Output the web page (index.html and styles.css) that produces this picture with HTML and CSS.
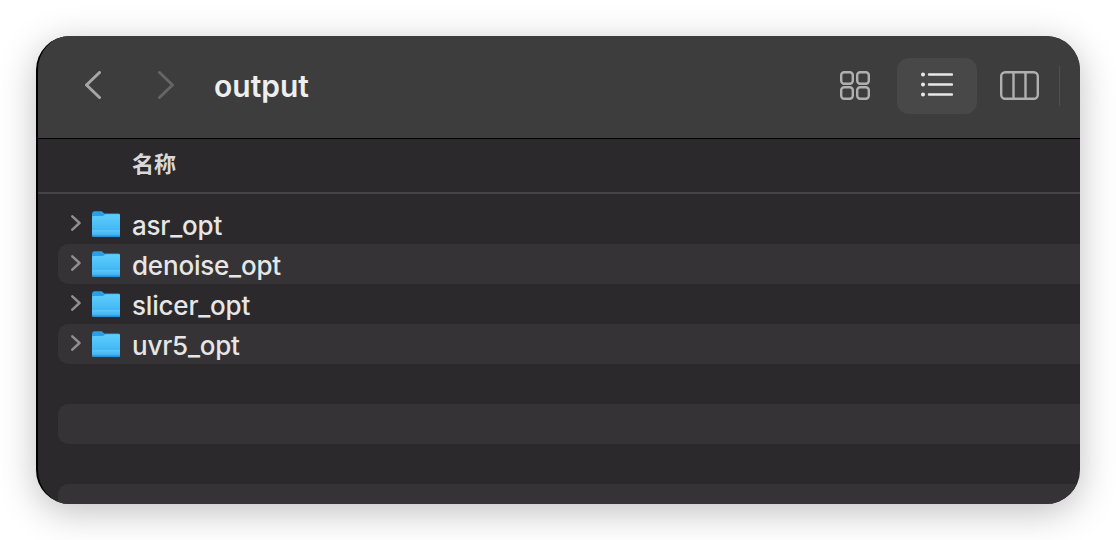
FILE: index.html
```html
<!DOCTYPE html>
<html lang="zh-CN">
<head>
    <meta charset="UTF-8">
    <title>output</title>
    <link rel="stylesheet" href="styles.css">
</head>
<body>
    <div class="window">
        <!-- ツールバー -->
        <header class="toolbar">
            <svg class="nav nav-back" width="16" height="28" viewBox="0 0 16 28"><path d="M14.5 1.5 1.5 14l13 12.500"/></svg>
            <svg class="nav nav-forward" width="16" height="28" viewBox="0 0 16 28"><path d="M1.5 1.5 14.500 14l-13 12.500"/></svg>
            <h1 class="title">output</h1>
            <svg class="view view-grid" width="30" height="29" viewBox="0 0 30 29">
                <rect x="1.200" y="1.200" width="11.600" height="11.600" rx="3"/>
                <rect x="17.200" y="1.200" width="11.600" height="11.600" rx="3"/>
                <rect x="1.200" y="16.200" width="11.600" height="11.600" rx="3"/>
                <rect x="17.200" y="16.200" width="11.600" height="11.600" rx="3"/>
            </svg>
            <div class="view-active">
                <svg class="view-list" width="32" height="25" viewBox="0 0 32 25">
                    <circle cx="2" cy="2.500" r="2"/>
                    <circle cx="2" cy="12.500" r="2"/>
                    <circle cx="2" cy="22.500" r="2"/>
                    <path d="M8 2.500h23M8 12.500h23M8 22.500h23"/>
                </svg>
            </div>
            <svg class="view view-columns" width="39" height="29" viewBox="0 0 39 29">
                <rect x="1.200" y="1.200" width="36.600" height="26.600" rx="4"/>
                <path d="M13.500 1v27M25.500 1v27"/>
            </svg>
            <div class="divider"></div>
        </header>

        <div class="list-header">名称</div>

        <div class="rows">
            <div class="row">
                <svg class="disclosure" width="10" height="16" viewBox="0 0 10 16"><path d="M1.300 1.300 8.500 8l-7.200 6.700"/></svg>
                <svg class="folder" width="28" height="26" viewBox="0 0 28 26"><use href="#folder-icon"/></svg>
                <span class="name">asr_opt</span>
            </div>
            <div class="row stripe">
                <svg class="disclosure" width="10" height="16" viewBox="0 0 10 16"><path d="M1.300 1.300 8.500 8l-7.200 6.700"/></svg>
                <svg class="folder" width="28" height="26" viewBox="0 0 28 26"><use href="#folder-icon"/></svg>
                <span class="name">denoise_opt</span>
            </div>
            <div class="row">
                <svg class="disclosure" width="10" height="16" viewBox="0 0 10 16"><path d="M1.300 1.300 8.500 8l-7.200 6.700"/></svg>
                <svg class="folder" width="28" height="26" viewBox="0 0 28 26"><use href="#folder-icon"/></svg>
                <span class="name">slicer_opt</span>
            </div>
            <div class="row stripe">
                <svg class="disclosure" width="10" height="16" viewBox="0 0 10 16"><path d="M1.300 1.300 8.500 8l-7.200 6.700"/></svg>
                <svg class="folder" width="28" height="26" viewBox="0 0 28 26"><use href="#folder-icon"/></svg>
                <span class="name">uvr5_opt</span>
            </div>
            <div class="row"></div>
            <div class="row stripe"></div>
            <div class="row"></div>
            <div class="row stripe"></div>
        </div>
    </div>

    <svg class="defs" width="0" height="0">
        <defs>
            <linearGradient id="folder-front" x1="0" y1="0" x2="0" y2="1">
                <stop offset="0" stop-color="#5fcdfc"/>
                <stop offset="0.68" stop-color="#42b8f4"/>
                <stop offset="0.7" stop-color="#5cc6f9"/>
                <stop offset="1" stop-color="#38ace9"/>
            </linearGradient>
            <symbol id="folder-icon" viewBox="0 0 28 26">
                <path d="M0 3.200C0 1.400 1 .3 2.600.3h6c1.200 0 1.800.4 2.600 1.100.9.8 1.500 1.200 2.700 1.200h12.400c1 0 1.700.7 1.700 1.700V10H0z" fill="#2a9fe6"/>
                <path d="M0 6.400c0-.9.7-1.300 1.400-1.300h7.800c1.300 0 2-.3 2.800-.9.8-.6 1.400-1 2.600-1h12c1.100 0 1.900.6 1.900 1.700v19.400c0 1-.7 1.700-1.700 1.700H1.700C.7 26 0 25.300 0 24.300z" fill="url(#folder-front)"/>
                <path d="M0 24.600h28v.2c0 .7-.7 1.200-1.600 1.200H1.600C.7 26 0 25.500 0 24.800z" fill="#2490d8"/>
            </symbol>
        </defs>
    </svg>
</body>
</html>
```

FILE: styles.css
```css
/* 基本デザイン */
html,
body {
    height: 100%;
}

body {
    box-sizing: border-box;
    margin: 0;
    padding: 36px;
    background-color: #ffffff;
    font-family: Inter, "Liberation Sans", "Noto Sans CJK SC", sans-serif;
    overflow: hidden;
}

.defs {
    display: block;
}

/* ウィンドウ */
.window {
    box-sizing: border-box;
    width: 1044px;
    height: 468px;
    border-left: 2px solid #000000;
    border-radius: 34px;
    background-color: #2b292b;
    box-shadow: 0 8px 36px rgba(0, 0, 0, 0.25);
    overflow: hidden;
}

/* ツールバー */
.toolbar {
    display: flex;
    align-items: center;
    box-sizing: border-box;
    height: 103px;
    padding: 0 0 2px 47px;
    background-color: #3d3d3d;
    border-bottom: 1px solid #000000;
}

.nav,
.view {
    flex: none;
    margin-top: -2px;
}

.nav path {
    fill: none;
    stroke-width: 3;
    stroke-linecap: round;
    stroke-linejoin: round;
}

.nav-back path {
    stroke: #a6a6a6;
}

.nav-forward {
    margin-left: 57px;
}

.nav-forward path {
    stroke: #656565;
}

.title {
    flex: none;
    width: 626px;
    margin: 0 0 0 40px;
    color: #eeeeee;
    font-size: 30px;
    font-weight: 600;
    line-height: 32px;
}

.view rect,
.view path {
    fill: none;
    stroke: #b0b0b0;
    stroke-width: 2.4;
}

.view-active {
    display: flex;
    flex: none;
    align-items: center;
    justify-content: center;
    width: 80px;
    height: 56px;
    margin: 0 23px 0 27px;
    border-radius: 12px;
    background-color: #484848;
}

.view-list {
    margin-top: -4px;
}

.view-list circle {
    fill: #e8e8e8;
}

.view-list path {
    fill: none;
    stroke: #e8e8e8;
    stroke-width: 2.4;
    stroke-linecap: round;
}

.divider {
    flex: none;
    width: 1px;
    height: 40px;
    margin-left: 20px;
    background-color: #4f4f4f;
}

/* 一覧のヘッダー */
.list-header {
    box-sizing: border-box;
    height: 55px;
    padding-left: 94px;
    border-bottom: 2px solid #444345;
    color: #d8d8d8;
    font-family: "Noto Sans CJK SC", sans-serif;
    font-size: 22px;
    font-weight: 700;
    line-height: 46px;
}

/* 行 */
.rows {
    padding: 10px 0 0 20px;
}

.row {
    display: flex;
    align-items: center;
    height: 40px;
}

.stripe {
    border-radius: 10px 0 0 10px;
    background-color: #353335;
}

.disclosure {
    margin-left: 13px;
    margin-top: -2px;
}

.disclosure path {
    fill: none;
    stroke: #8e8e8e;
    stroke-width: 2.5;
    stroke-linecap: round;
    stroke-linejoin: round;
}

.folder {
    margin-left: 11px;
    margin-top: -1px;
}

.name {
    margin-left: 12px;
    padding-top: 3px;
    color: #e6e6e6;
    font-size: 26px;
    font-weight: 450;
    letter-spacing: -0.2px;
    line-height: 40px;
}
```
